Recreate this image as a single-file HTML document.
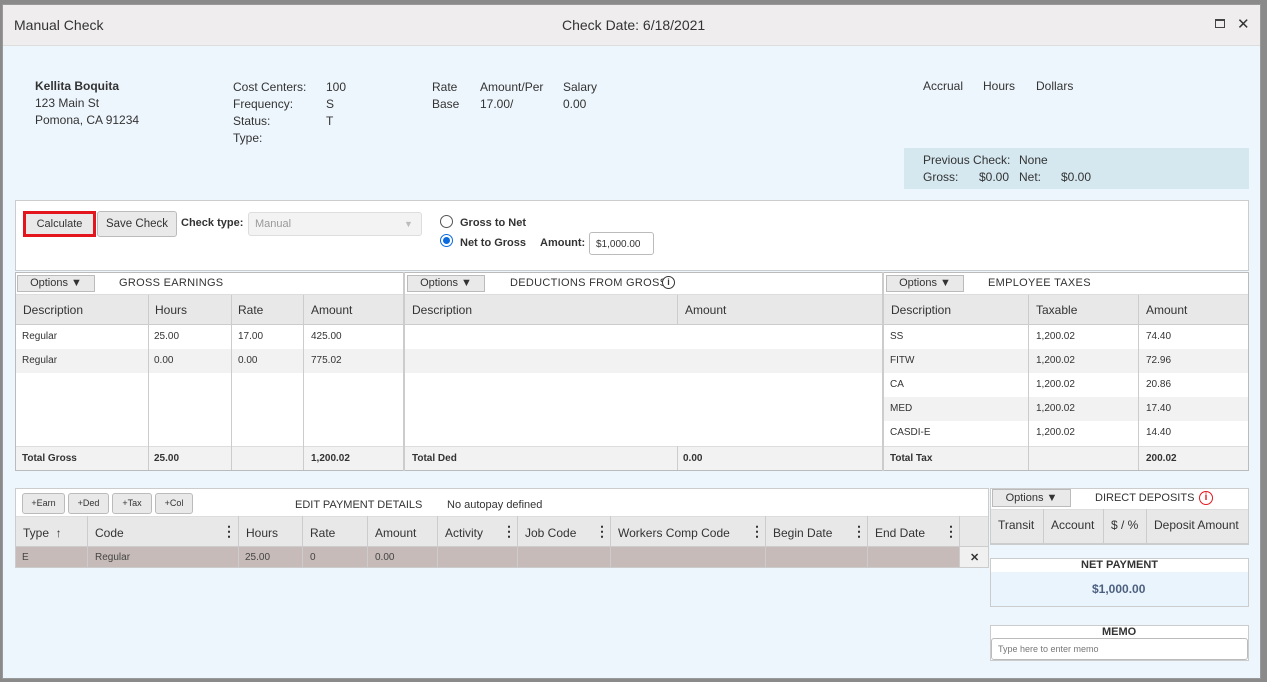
<!DOCTYPE html>
<html><head><style>
*{box-sizing:border-box;margin:0;padding:0}
body{width:1267px;height:682px;background:#8a8a8a;font-family:"Liberation Sans",sans-serif;color:#333;position:relative;overflow:hidden}
.a{position:absolute}
.t{position:absolute;white-space:nowrap;font-size:12px}
.s{font-size:10px}
.btn{position:absolute;background:#e9e9e9;border:1px solid #bbb;border-radius:3px;font-size:11px;text-align:center}
.bx{position:absolute;background:#fff;border:1px solid #ccc}
.hd{position:absolute;background:#e8e8e8;border-bottom:1px solid #ccc}
.v{position:absolute;width:1px;background:#ccc}
</style></head><body>
<div class="a" style="left:2px;top:4px;width:1259px;height:675px;background:#eef6fd;border:1px solid #999"></div>
<div class="a" style="left:3px;top:5px;width:1257px;height:41px;background:#efeded;border-bottom:1px solid #ddd"></div>
<div class="t" style="left:14px;top:17px;font-size:14px">Manual Check</div>
<div class="t" style="left:562px;top:17px;font-size:14px">Check Date: 6/18/2021</div>
<div class="a" style="left:1215px;top:19px;width:10px;height:9px;border:1px solid #444;border-top-width:2px"></div>
<div class="t" style="left:1237px;top:15px;font-size:15px">✕</div>

<div class="t" style="left:35px;top:79px;font-weight:bold">Kellita Boquita</div>
<div class="t" style="left:35px;top:96px">123 Main St</div>
<div class="t" style="left:35px;top:113px">Pomona, CA 91234</div>
<div class="t" style="left:233px;top:79px;line-height:17px">Cost Centers:<br>Frequency:<br>Status:<br>Type:</div>
<div class="t" style="left:326px;top:79px;line-height:17px">100<br>S<br>T</div>
<div class="t" style="left:432px;top:79px;line-height:17px">Rate<br>Base</div>
<div class="t" style="left:480px;top:79px;line-height:17px">Amount/Per<br>17.00/</div>
<div class="t" style="left:563px;top:79px;line-height:17px">Salary<br>0.00</div>
<div class="t" style="left:923px;top:79px">Accrual</div>
<div class="t" style="left:983px;top:79px">Hours</div>
<div class="t" style="left:1036px;top:79px">Dollars</div>
<div class="a" style="left:904px;top:148px;width:345px;height:41px;background:#d5e8f0"></div>
<div class="t" style="left:923px;top:153px">Previous Check:</div><div class="t" style="left:1019px;top:153px">None</div>
<div class="t" style="left:923px;top:170px">Gross:</div><div class="t" style="left:979px;top:170px">$0.00</div><div class="t" style="left:1019px;top:170px">Net:</div><div class="t" style="left:1061px;top:170px">$0.00</div>

<div class="bx" style="left:15px;top:200px;width:1234px;height:71px"></div>
<div class="btn" style="left:23px;top:211px;width:73px;height:26px;border:3px solid #e4161d;border-radius:0;line-height:21px">Calculate</div>
<div class="btn" style="left:97px;top:211px;width:80px;height:26px;line-height:24px;font-size:11.5px">Save Check</div>
<div class="t" style="left:181px;top:217px;font-size:11px;font-weight:bold">Check type:</div>
<div class="a" style="left:248px;top:212px;width:174px;height:24px;background:#f3f3f3;border:1px solid #ddd;border-radius:3px"></div>
<div class="t" style="left:255px;top:218px;font-size:11px;color:#999">Manual</div>
<div class="t" style="left:404px;top:219px;font-size:9px;color:#bbb">▼</div>
<div class="a" style="left:440px;top:215px;width:13px;height:13px;border:1px solid #555;border-radius:50%;background:#fff"></div>
<div class="t" style="left:460px;top:217px;font-size:11px;font-weight:bold">Gross to Net</div>
<div class="a" style="left:440px;top:234px;width:13px;height:13px;border:1px solid #0a6be0;border-radius:50%;background:#fff"></div>
<div class="a" style="left:443px;top:237px;width:7px;height:7px;border-radius:50%;background:#0a6be0"></div>
<div class="t" style="left:460px;top:237px;font-size:11px;font-weight:bold">Net to Gross</div>
<div class="t" style="left:540px;top:237px;font-size:11px;font-weight:bold">Amount:</div>
<div class="a" style="left:589px;top:232px;width:65px;height:23px;background:#fff;border:1px solid #bbb;border-radius:3px"></div>
<div class="t" style="left:596px;top:239px;font-size:10px">$1,000.00</div>

<!-- tables -->
<div class="bx" style="left:15px;top:272px;width:1234px;height:199px;border-color:#bbb"></div>
<div class="hd" style="left:16px;top:294px;width:1232px;height:31px;border-top:1px solid #ddd"></div>
<div class="a" style="left:16px;top:349px;width:1232px;height:24px;background:#f2f2f2"></div>
<div class="a" style="left:884px;top:397px;width:364px;height:24px;background:#f2f2f2"></div>
<div class="a" style="left:16px;top:446px;width:1232px;height:24px;background:#f2f2f2;border-top:1px solid #ddd"></div>
<div class="a" style="left:403px;top:272px;width:2px;height:199px;background:#ccc"></div>
<div class="a" style="left:882px;top:272px;width:2px;height:199px;background:#ccc"></div>
<div class="btn" style="left:17px;top:275px;width:78px;height:17px;line-height:15px;border-radius:0">Options ▼</div>
<div class="btn" style="left:407px;top:275px;width:78px;height:17px;line-height:15px;border-radius:0">Options ▼</div>
<div class="btn" style="left:886px;top:275px;width:78px;height:17px;line-height:15px;border-radius:0">Options ▼</div>
<div class="t" style="left:119px;top:277px;font-size:11px;letter-spacing:.3px">GROSS EARNINGS</div>
<div class="t" style="left:510px;top:277px;font-size:11px;letter-spacing:.3px">DEDUCTIONS FROM GROSS</div>
<div class="a" style="left:662px;top:276px;width:13px;height:13px;border:1px solid #333;border-radius:50%;font-size:9px;text-align:center;line-height:11px;font-weight:bold;background:#fff">i</div>
<div class="t" style="left:988px;top:277px;font-size:11px;letter-spacing:.3px">EMPLOYEE TAXES</div>
<div class="v" style="left:148px;top:295px;height:175px"></div><div class="v" style="left:231px;top:295px;height:175px"></div><div class="v" style="left:303px;top:295px;height:175px"></div>
<div class="v" style="left:677px;top:295px;height:30px"></div><div class="v" style="left:677px;top:446px;height:24px"></div>
<div class="v" style="left:1028px;top:295px;height:175px"></div><div class="v" style="left:1138px;top:295px;height:175px"></div>
<div class="t" style="left:23px;top:303px">Description</div><div class="t" style="left:155px;top:303px">Hours</div><div class="t" style="left:238px;top:303px">Rate</div><div class="t" style="left:311px;top:303px">Amount</div>
<div class="t" style="left:412px;top:303px">Description</div><div class="t" style="left:685px;top:303px">Amount</div>
<div class="t" style="left:891px;top:303px">Description</div><div class="t" style="left:1036px;top:303px">Taxable</div><div class="t" style="left:1146px;top:303px">Amount</div>
<div class="t s" style="left:22px;top:331px">Regular</div><div class="t s" style="left:154px;top:331px">25.00</div><div class="t s" style="left:238px;top:331px">17.00</div><div class="t s" style="left:311px;top:331px">425.00</div>
<div class="t s" style="left:22px;top:355px">Regular</div><div class="t s" style="left:154px;top:355px">0.00</div><div class="t s" style="left:238px;top:355px">0.00</div><div class="t s" style="left:311px;top:355px">775.02</div>
<div class="t s" style="left:890px;top:325px;line-height:24px">SS<br>FITW<br>CA<br>MED<br>CASDI-E</div>
<div class="t s" style="left:1036px;top:325px;line-height:24px">1,200.02<br>1,200.02<br>1,200.02<br>1,200.02<br>1,200.02</div>
<div class="t s" style="left:1146px;top:325px;line-height:24px">74.40<br>72.96<br>20.86<br>17.40<br>14.40</div>
<div class="t s" style="left:22px;top:453px;font-weight:bold">Total Gross</div><div class="t s" style="left:154px;top:453px;font-weight:bold">25.00</div><div class="t s" style="left:311px;top:453px;font-weight:bold">1,200.02</div>
<div class="t s" style="left:412px;top:453px;font-weight:bold">Total Ded</div><div class="t s" style="left:683px;top:453px;font-weight:bold">0.00</div>
<div class="t s" style="left:890px;top:453px;font-weight:bold">Total Tax</div><div class="t s" style="left:1146px;top:453px;font-weight:bold">200.02</div>

<!-- edit payment -->
<div class="bx" style="left:15px;top:488px;width:974px;height:80px"></div>
<div class="btn" style="left:22px;top:493px;width:43px;height:21px;line-height:19px;font-size:9px">+Earn</div>
<div class="btn" style="left:68px;top:493px;width:41px;height:21px;line-height:19px;font-size:9px">+Ded</div>
<div class="btn" style="left:112px;top:493px;width:40px;height:21px;line-height:19px;font-size:9px">+Tax</div>
<div class="btn" style="left:155px;top:493px;width:38px;height:21px;line-height:19px;font-size:9px">+Col</div>
<div class="t" style="left:295px;top:499px;font-size:11px">EDIT PAYMENT DETAILS</div>
<div class="t" style="left:447px;top:499px;font-size:11px">No autopay defined</div>
<div class="hd" style="left:16px;top:516px;width:972px;height:31px;border-top:1px solid #ddd"></div>
<div class="a" style="left:16px;top:547px;width:944px;height:20px;background:#c6bbb8"></div>
<div class="a" style="left:960px;top:547px;width:28px;height:20px;background:#f0f0f0"></div>
<div class="v" style="left:87px;top:516px;height:51px"></div><div class="v" style="left:238px;top:516px;height:51px"></div><div class="v" style="left:302px;top:516px;height:51px"></div><div class="v" style="left:367px;top:516px;height:51px"></div><div class="v" style="left:437px;top:516px;height:51px"></div><div class="v" style="left:517px;top:516px;height:51px"></div><div class="v" style="left:610px;top:516px;height:51px"></div><div class="v" style="left:765px;top:516px;height:51px"></div><div class="v" style="left:867px;top:516px;height:51px"></div><div class="v" style="left:959px;top:516px;height:51px"></div>
<div class="t" style="left:23px;top:526px">Type &nbsp;↑</div><div class="t" style="left:95px;top:526px">Code</div><div class="t" style="left:246px;top:526px">Hours</div><div class="t" style="left:310px;top:526px">Rate</div><div class="t" style="left:375px;top:526px">Amount</div><div class="t" style="left:445px;top:526px">Activity</div><div class="t" style="left:525px;top:526px">Job Code</div><div class="t" style="left:618px;top:526px">Workers Comp Code</div><div class="t" style="left:773px;top:526px">Begin Date</div><div class="t" style="left:875px;top:526px">End Date</div>
<div class="t" style="left:222px;top:523px;font-weight:bold;font-size:14px">⋮</div><div class="t" style="left:502px;top:523px;font-weight:bold;font-size:14px">⋮</div><div class="t" style="left:595px;top:523px;font-weight:bold;font-size:14px">⋮</div><div class="t" style="left:750px;top:523px;font-weight:bold;font-size:14px">⋮</div><div class="t" style="left:852px;top:523px;font-weight:bold;font-size:14px">⋮</div><div class="t" style="left:944px;top:523px;font-weight:bold;font-size:14px">⋮</div>
<div class="t s" style="left:22px;top:552px;color:#444">E</div><div class="t s" style="left:95px;top:552px;color:#444">Regular</div><div class="t s" style="left:245px;top:552px;color:#444">25.00</div><div class="t s" style="left:310px;top:552px;color:#444">0</div><div class="t s" style="left:375px;top:552px;color:#444">0.00</div>
<div class="t" style="left:970px;top:551px;font-size:11px;font-weight:bold">✕</div>

<!-- direct deposits -->
<div class="bx" style="left:990px;top:488px;width:259px;height:57px"></div>
<div class="btn" style="left:992px;top:489px;width:79px;height:18px;line-height:16px;border-radius:0">Options ▼</div>
<div class="t" style="left:1095px;top:492px;font-size:11px">DIRECT DEPOSITS</div>
<div class="a" style="left:1199px;top:491px;width:14px;height:14px;border:1.5px solid #e4161d;border-radius:50%;font-size:10px;color:#e4161d;text-align:center;line-height:11px;font-weight:bold">i</div>
<div class="hd" style="left:991px;top:509px;width:257px;height:35px;border-top:1px solid #ddd"></div>
<div class="v" style="left:1043px;top:509px;height:35px"></div><div class="v" style="left:1103px;top:509px;height:35px"></div><div class="v" style="left:1146px;top:509px;height:35px"></div>
<div class="t" style="left:998px;top:518px">Transit</div><div class="t" style="left:1051px;top:518px">Account</div><div class="t" style="left:1111px;top:518px">$ / %</div><div class="t" style="left:1154px;top:518px">Deposit Amount</div>

<div class="a" style="left:990px;top:558px;width:259px;height:49px;border:1px solid #ccc;background:#eaf4fc"></div>
<div class="a" style="left:991px;top:559px;width:257px;height:13px;background:#fff"></div>
<div class="t" style="left:1081px;top:559px;font-size:11px;font-weight:bold">NET PAYMENT</div>
<div class="t" style="left:1092px;top:582px;font-weight:bold;color:#4d6080">$1,000.00</div>

<div class="bx" style="left:990px;top:625px;width:259px;height:36px"></div>
<div class="t" style="left:1102px;top:626px;font-size:11px;font-weight:bold">MEMO</div>
<div class="a" style="left:991px;top:638px;width:257px;height:22px;border:1px solid #bbb;border-radius:3px;background:#fff"></div>
<div class="t" style="left:998px;top:644px;font-size:9px;color:#777">Type here to enter memo</div>
</body></html>
